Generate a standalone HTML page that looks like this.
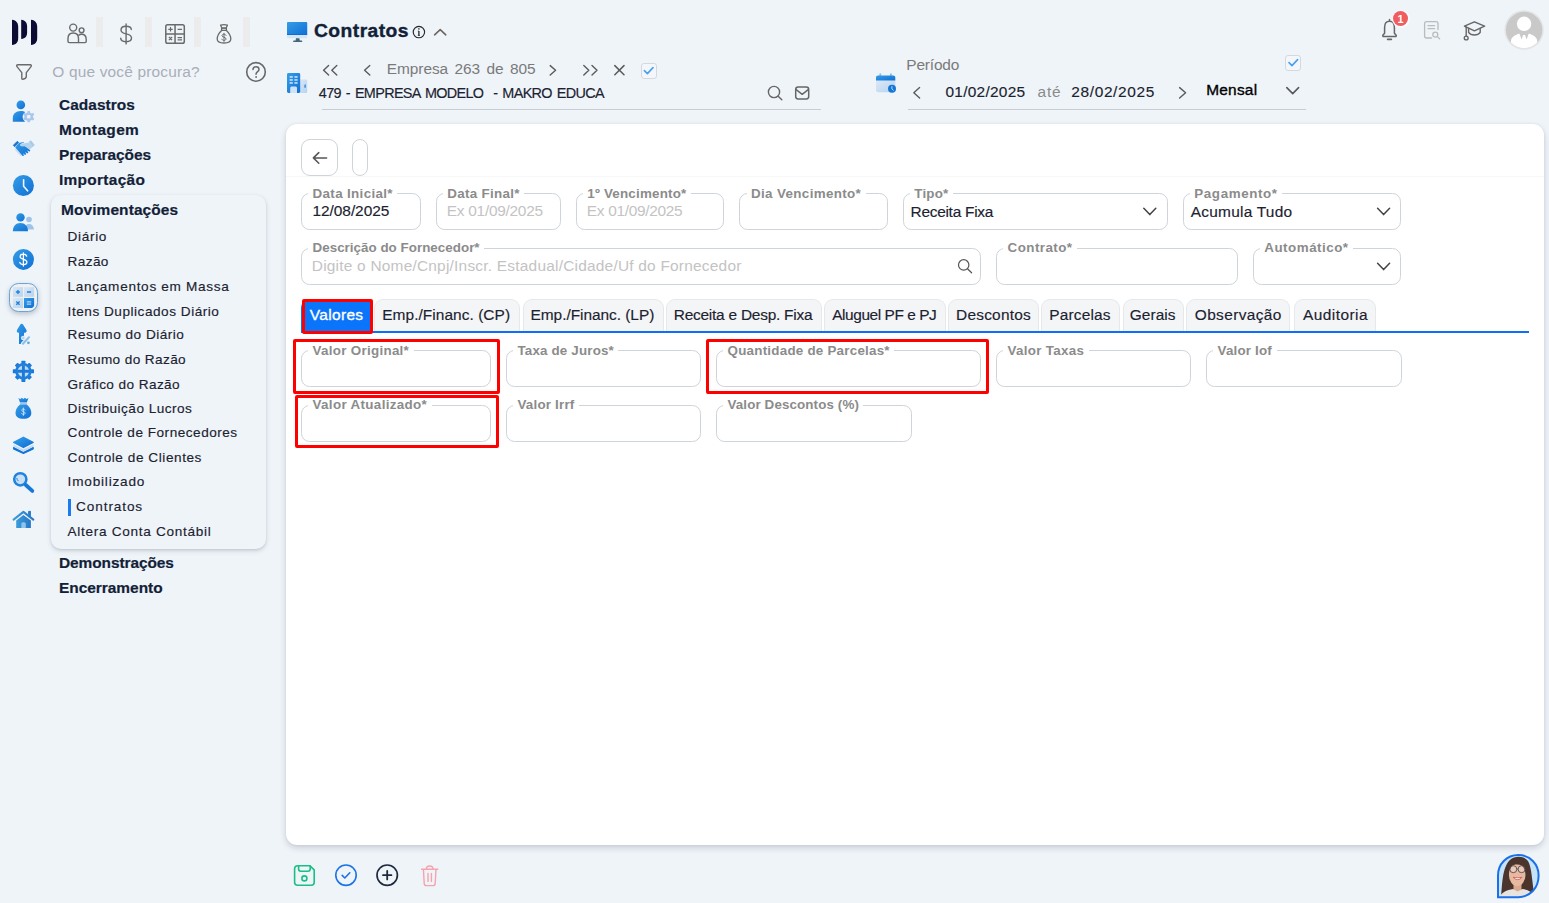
<!DOCTYPE html>
<html lang="pt-BR">
<head>
<meta charset="utf-8">
<title>Contratos</title>
<style>
*{box-sizing:border-box;margin:0;padding:0}
html,body{width:1549px;height:903px;overflow:hidden}
body{background:#eff4f9;font-family:"Liberation Sans",sans-serif;position:relative;color:#1f2329}
.a{position:absolute}
.t{position:absolute;white-space:pre;line-height:20px}
.lb{background:#fff;padding:0 4.5px;margin-left:-4.5px}
.card{left:286px;top:124px;width:1258px;height:721px;background:#fff;border-radius:11px;box-shadow:0 3px 6px rgba(50,60,70,.2),0 0 2px rgba(50,60,70,.1)}
.panel{left:51px;top:195px;width:215px;height:354px;background:#eff4f9;border-radius:10px;box-shadow:0 2px 5px rgba(40,55,75,.16),0 1px 2.5px rgba(40,55,75,.11)}
.sep{top:17px;width:7px;height:30px;background:#ececec}
.f{position:absolute;border:1px solid #ced4da;border-radius:8.5px;height:37px;background:#fff}
.tab{position:absolute;top:299px;height:32px;background:#f4f5f6;border:1px solid #e6e8ea;border-bottom:none;border-radius:9px 9px 0 0}
.red{position:absolute;z-index:5;border:3px solid #ff0000;border-radius:2px}
.btn{position:absolute;border:1px solid #cfd4d9;border-radius:9px;background:#fff;top:139px;height:37px}
.ul{position:absolute;height:1px;background:#c9ccd0;top:109px}
svg{position:absolute;overflow:visible}
</style>
</head>
<body>
<div class="a panel"></div>
<div class="a" style="left:68px;top:499px;width:3px;height:17px;background:#1a7af0"></div>
<div class="a sep" style="left:96px"></div>
<div class="a sep" style="left:145px"></div>
<div class="a sep" style="left:194px"></div>
<div class="a sep" style="left:243px"></div>
<div class="ul" style="left:322px;width:499px"></div>
<div class="ul" style="left:908px;width:398px"></div>
<div class="a card"></div>
<div class="a" style="left:286px;top:176px;width:1258px;height:1px;background:#f8f8f8"></div>
<div class="btn" style="left:301px;width:37px"></div>
<div class="btn" style="left:352px;width:16px"></div>
<!-- row 1 -->
<div class="f" style="left:301px;top:193px;width:120px"></div>
<div class="f" style="left:436px;top:193px;width:125px"></div>
<div class="f" style="left:576px;top:193px;width:147.5px"></div>
<div class="f" style="left:739px;top:193px;width:149px"></div>
<div class="f" style="left:903px;top:193px;width:265px"></div>
<div class="f" style="left:1183px;top:193px;width:218px"></div>
<!-- row 2 -->
<div class="f" style="left:301px;top:248px;width:680px"></div>
<div class="f" style="left:996px;top:248px;width:242px"></div>
<div class="f" style="left:1253px;top:248px;width:148px"></div>
<!-- tabs -->
<div class="a" style="left:301px;top:331px;width:1228px;height:2px;background:#0b6ff8"></div>
<div class="a" style="left:301px;top:300px;width:72px;height:33px;background:#0a75fb;border-radius:8px 8px 0 0"></div>
<div class="tab" style="left:374px;width:146px"></div>
<div class="tab" style="left:522.5px;width:141px"></div>
<div class="tab" style="left:666px;width:156px"></div>
<div class="tab" style="left:824px;width:122px"></div>
<div class="tab" style="left:948px;width:91px"></div>
<div class="tab" style="left:1041px;width:79px"></div>
<div class="tab" style="left:1122.5px;width:61px"></div>
<div class="tab" style="left:1186px;width:104px"></div>
<div class="tab" style="left:1294px;width:82px"></div>
<!-- row 3 -->
<div class="f" style="left:301px;top:350px;width:190px"></div>
<div class="f" style="left:506px;top:350px;width:195px"></div>
<div class="f" style="left:716px;top:350px;width:265px"></div>
<div class="f" style="left:996px;top:350px;width:195px"></div>
<div class="f" style="left:1206px;top:350px;width:196px"></div>
<!-- row 4 -->
<div class="f" style="left:301px;top:405px;width:190px"></div>
<div class="f" style="left:506px;top:405px;width:195px"></div>
<div class="f" style="left:716px;top:405px;width:196px"></div>
<!-- red boxes -->
<div class="red" style="left:302px;top:299px;width:71px;height:35px"></div>
<div class="red" style="left:293px;top:339px;width:207px;height:55px"></div>
<div class="red" style="left:706px;top:339px;width:283px;height:55px"></div>
<div class="red" style="left:295px;top:395px;width:204px;height:53px"></div>

<svg width="0" height="0"><defs>
<linearGradient id="gb" x1="0" y1="0" x2="1" y2="1"><stop offset="0" stop-color="#359de6"/><stop offset="1" stop-color="#0f6fd6"/></linearGradient>
<linearGradient id="gl" x1="0" y1="0" x2="1" y2="1"><stop offset="0" stop-color="#dbe8f6"/><stop offset="1" stop-color="#b7d3ef"/></linearGradient>
</defs></svg>
<!-- logo -->
<svg style="left:11px;top:19px" width="28" height="27" viewBox="11 19 28 27">
<path d="M12 19.8 C16.5 20.3 18.2 23.5 18.2 27 V38 C18.2 42 16.5 44.6 12 45.1 Z" fill="#0b0b33"/>
<path d="M21.2 19.8 C25.5 20.3 27.1 23 27.1 26.5 V32.5 C27.1 36 25.5 38.6 21.2 39.1 Z" fill="#0b0b33"/>
<path d="M31 19.8 C35.5 20.3 37.2 23.5 37.2 27 V38 C37.2 42 35.5 44.6 31 45.1 Z" fill="#0b0b33"/>
</svg>
<!-- people outline -->
<svg style="left:66px;top:23px" width="22" height="22" viewBox="66 23 22 22" fill="none" stroke="#6a6a6a" stroke-width="1.4" stroke-linejoin="round">
<circle cx="73.2" cy="27.6" r="3.5"/>
<path d="M68 41.5 V38.5 C68 35 70 33 73.2 33 C76.4 33 78.5 35 78.5 38.5 V42.6 H69.2 C68.4 42.6 68 42.2 68 41.5 Z"/>
<circle cx="81.6" cy="30.3" r="2.4"/>
<path d="M78.5 42.6 H85 C85.8 42.6 86.2 42.2 86.2 41.5 V39.5 C86.2 36.2 84.5 34.3 81.6 34.3 C80.3 34.3 79.3 34.7 78.5 35.4"/>
</svg>
<!-- dollar outline -->
<svg style="left:119px;top:23px" width="14" height="22" viewBox="119 23 14 22" fill="none" stroke="#6a6a6a" stroke-width="1.4" stroke-linecap="round">
<path d="M126.1 24 V43.9"/>
<path d="M131.3 29.6 C131.3 27.5 129.3 26.3 126.1 26.3 C123 26.3 121 27.7 121 30 C121 32.4 123 33.2 126.1 33.9 C129.4 34.6 131.5 35.5 131.5 38 C131.5 40.4 129.4 41.7 126.1 41.7 C122.8 41.7 120.7 40.4 120.7 38.1"/>
</svg>
<!-- calculator outline -->
<svg style="left:164px;top:23px" width="22" height="22" viewBox="164 23 22 22" fill="none" stroke="#6a6a6a" stroke-width="1.5">
<rect x="165.8" y="24.7" width="18.5" height="18.5" rx="1.8"/>
<path d="M175.05 24.7 V43.2 M165.8 33.95 H184.3"/>
<path d="M168.3 29.3 H172.7 M170.5 27.1 V31.5 M177.6 29.3 H182 M168.9 37 L172.1 40.2 M172.1 37 L168.9 40.2 M177.6 37.6 H182 M177.6 39.8 H182" stroke-width="1.2"/>
</svg>
<!-- money bag outline -->
<svg style="left:215px;top:23px" width="18" height="22" viewBox="215 23 18 22" fill="none" stroke="#6a6a6a" stroke-width="1.3" stroke-linejoin="round" stroke-linecap="round">
<path d="M220.6 25.2 C222.5 24.6 225.5 24.6 227.4 25.2 L226 28.2 H222 Z"/>
<path d="M221.6 28.2 H226.4 V30.4 H221.6 Z"/>
<path d="M221.6 30.4 C218.8 33 217.2 36.5 217.2 39 C217.2 41.8 219.5 43 224 43 C228.5 43 230.8 41.8 230.8 39 C230.8 36.5 229.2 33 226.4 30.4"/>
<path d="M226 35.3 C225.6 34.5 224.9 34.2 224 34.2 C222.8 34.2 222 34.8 222 35.7 C222 37.6 226 36.9 226 38.9 C226 39.8 225.2 40.4 224 40.4 C222.9 40.4 222.2 40 221.9 39.2 M224 33.3 V41.3" stroke-width="1"/>
</svg>
<!-- filter -->
<svg style="left:15px;top:63px" width="18" height="18" viewBox="15 63 18 18" fill="none" stroke="#6a6a6a" stroke-width="1.4" stroke-linejoin="round">
<path d="M17.8 64.8 H30.2 C31.3 64.8 31.7 65.7 31 66.6 L26.3 72.6 V76.5 C26.3 78 24.5 79 22.8 79.3 C22 79.4 21.8 79 21.8 78.3 V72.6 L17 66.6 C16.3 65.7 16.7 64.8 17.8 64.8 Z"/>
</svg>
<!-- help -->
<svg style="left:245px;top:61px" width="22" height="22" viewBox="245 61 22 22" fill="none" stroke="#686868" stroke-width="1.600" stroke-linecap="round">
<circle cx="256" cy="71.9" r="9.3"/>
<path d="M253 69.6 C253 67.9 254.2 66.8 256 66.8 C257.8 66.8 259 67.9 259 69.4 C259 71.6 256 71.6 256 74.2" stroke-width="1.500"/>
<circle cx="256" cy="77" r=".5" fill="#666" stroke-width=".8"/>
</svg>
<!-- user gear -->
<svg style="left:12px;top:100px" width="24" height="24" viewBox="12 100 24 24">
<circle cx="20.8" cy="104.9" r="4.3" fill="url(#gb)"/>
<path d="M12.8 121.8 V118.5 C12.8 113.8 15.8 111 20.8 111 C22.6 111 24.2 111.4 25.4 112.1 C23.6 113.4 22.6 115 22.6 116.8 C22.6 118.8 23.6 120.6 25.2 121.8 Z" fill="url(#gb)"/>
<g transform="translate(28.7 116.7)" fill="#a9c8ec">
<path d="M-1.1 -5.6 H1.1 L1.5 -4 L3 -3.2 L4.5 -3.9 L5.6 -2 L4.4 -.9 V.9 L5.6 2 L4.5 3.9 L3 3.2 L1.5 4 L1.1 5.6 H-1.1 L-1.5 4 L-3 3.2 L-4.5 3.9 L-5.6 2 L-4.4 .9 V-.9 L-5.6 -2 L-4.5 -3.9 L-3 -3.2 L-1.5 -4 Z"/>
<circle r="1.9" fill="#eff4f9"/>
</g>
</svg>
<!-- handshake -->
<svg style="left:12px;top:139px" width="24" height="19" viewBox="12 139 24 19">
<path d="M20.4 144 L28.8 142.400 L32.6 146.800 L29.800 149.600 L25.200 146 L22.400 146 C21 146 20.200 145.200 20.400 144 Z" fill="#b3d3ed"/>
<path d="M29.200 141.900 L30.900 140.700 L34.300 145 L32.700 146.700 Z" fill="#a6cbea" stroke="#a6cbea" stroke-width=".8" stroke-linejoin="round"/>
<path d="M15.600 149.600 L17 151.200 M17.500 151.800 L18.900 153.400 M19.500 153.800 L20.800 155.300" stroke="#c8dff3" stroke-width="1.400" stroke-linecap="round"/>
<path d="M15.200 147.400 L18.800 143.200 C20.200 142.300 22 142 24 142.200 L23.800 143.100 C22 143.100 20.800 143.600 20 144.700 C20.400 145.800 21.400 146.200 22.600 146.200 L25 146.200 L30 150 C30.500 150.700 30 151.700 29.200 151.400 L27.200 150.300 L28.300 152.400 C28.100 153.300 27.300 153.500 26.600 153 L25.200 151.800 L26.100 154 C25.900 154.900 25.100 155.100 24.400 154.600 L23.200 153.300 L23.900 155.400 C23.700 156.100 22.900 156.300 22.400 155.700 Z" fill="url(#gb)"/>
<path d="M13.300 145.300 L17.300 141.300 L18.700 142.500 L14.700 146.700 Z" fill="#1672d5" stroke="#1672d5" stroke-width=".8" stroke-linejoin="round"/>
</svg>
<!-- clock -->
<svg style="left:12px;top:174px" width="24" height="24" viewBox="12 174 24 24">
<circle cx="23.4" cy="185.5" r="10.5" fill="url(#gb)"/>
<path d="M23.6 179.8 V186.2 L27.6 190.8" fill="none" stroke="#eef5fc" stroke-width="1.6" stroke-linecap="round" stroke-linejoin="round"/>
</svg>
<!-- people -->
<svg style="left:12px;top:212px" width="24" height="20" viewBox="12 212 24 20">
<circle cx="29" cy="219.5" r="2.8" fill="#9cc3ea"/>
<path d="M24.5 229.6 C24.7 226 26.3 224 29 224 C31.8 224 33.6 226 34 229.6 Z" fill="#9cc3ea"/>
<circle cx="20.5" cy="217.4" r="4.2" fill="url(#gb)"/>
<path d="M12.8 231.2 C13 226 15.8 223 20.4 223 C25 223 27.8 226 28 231.2 Z" fill="url(#gb)"/>
</svg>
<!-- dollar circle -->
<svg style="left:12px;top:248px" width="24" height="24" viewBox="12 248 24 24">
<circle cx="23.4" cy="259.4" r="10.5" fill="url(#gb)"/>
<path d="M26.7 256.2 C26.3 254.9 25.1 254.2 23.4 254.2 C21.4 254.2 20.1 255.2 20.1 256.7 C20.1 260 26.9 258.6 26.9 262 C26.9 263.6 25.5 264.6 23.4 264.6 C21.5 264.6 20.2 263.8 19.8 262.4 M23.4 252.8 V266" fill="none" stroke="#fff" stroke-width="1.25" stroke-linecap="round"/>
</svg>
<!-- calc active -->
<div class="a" style="left:9px;top:283px;width:29px;height:29px;border-radius:9.5px;background:#f0f0ef;border:1px solid #62a6e3;box-shadow:0 2px 5px rgba(60,70,90,.3)"></div>
<svg style="left:12px;top:286px" width="23" height="23" viewBox="12 286 23 23">
<rect x="12.900" y="287.100" width="10.100" height="9.700" fill="url(#gl)"/>
<rect x="24" y="287.100" width="10.100" height="9.700" fill="url(#gl)"/>
<rect x="12.900" y="298" width="10.100" height="10" fill="url(#gl)"/>
<path d="M24 298 H34.100 V306 L32.100 308 H24 Z" fill="url(#gb)"/>
<path d="M15.900 292 H20 M17.950 289.950 V294.050 M27 292 H31.100 M16.300 301.400 L19.600 304.700 M19.600 301.400 L16.300 304.700" stroke="#2283dc" stroke-width="1.400" fill="none"/>
<path d="M26.800 301.800 H31.200 M26.800 304.200 H31.200" stroke="#b9d8f4" stroke-width="1.300"/>
</svg>
<!-- arrow up percent -->
<svg style="left:15px;top:322px" width="18" height="24" viewBox="15 322 18 24">
<path d="M21.700 323.800 C22.300 323.800 22.800 324.100 23.200 324.700 L26.300 329.800 C27.200 331.400 26.400 332.800 24.800 332.800 H24 V343.900 H19 V332.800 H18.600 C17 332.800 16.200 331.400 17.100 329.800 L20.200 324.700 C20.600 324.100 21.100 323.800 21.700 323.800 Z" fill="url(#gb)"/>
<path d="M22.900 343.700 L29 337.300" stroke="#eff4f9" stroke-width="4" stroke-linecap="round"/>
<circle cx="23.300" cy="338" r="2.300" fill="#eff4f9"/>
<path d="M22.900 343.700 L29 337.300" stroke="#8fc0e6" stroke-width="2.100" stroke-linecap="round"/>
<circle cx="23.300" cy="338" r="1.400" fill="#b5d5ef"/><circle cx="28.400" cy="342.800" r="1.400" fill="#5ea8de"/>
</svg>
<!-- gear with cross -->
<svg style="left:12px;top:360px" width="24" height="24" viewBox="12 360 24 24">
<g transform="translate(23.4 371.3)">
<circle r="6.6" fill="#c2dbf3"/>
<g fill="#1b7ad9"><rect x="-2" y="-10.6" width="4" height="4" rx=".6"/><rect x="-2" y="6.6" width="4" height="4" rx=".6"/><rect x="-10.6" y="-2" width="4" height="4" rx=".6"/><rect x="6.6" y="-2" width="4" height="4" rx=".6"/>
<g transform="rotate(45)"><rect x="-2" y="-10.2" width="4" height="3.6" rx=".6"/><rect x="-2" y="6.6" width="4" height="3.6" rx=".6"/><rect x="-10.2" y="-2" width="3.6" height="4" rx=".6"/><rect x="6.6" y="-2" width="3.6" height="4" rx=".6"/></g></g>
<circle r="7" fill="none" stroke="#1f80dc" stroke-width="2.600"/>
<path d="M0 -6 V6 M-6 0 H6" stroke="#1b7ad9" stroke-width="2.900"/>
</g>
</svg>
<!-- money bag -->
<svg style="left:14px;top:396px" width="20" height="24" viewBox="14 396 20 24">
<path d="M18.300 397.900 L20.300 399 L21.900 397.800 L23.400 399 L24.900 397.800 L26.500 399 L28.500 397.900 L26.800 402.400 H20 Z" fill="url(#gb)"/>
<rect x="20" y="402.500" width="6.800" height="2" fill="#9cc6ec"/>
<path d="M20 404.600 H26.800 C29.800 407 31.300 410 31.300 413 C31.300 416.800 28.400 418.800 23.400 418.800 C18.400 418.800 15.500 416.800 15.500 413 C15.500 410 17 407 20 404.600 Z" fill="url(#gb)"/>
<path d="M25 410 C24.800 409.400 24.200 409 23.400 409 C22.400 409 21.800 409.500 21.800 410.300 C21.800 412 25.100 411.300 25.100 413.100 C25.100 413.900 24.400 414.400 23.400 414.400 C22.500 414.400 21.900 414 21.700 413.300 M23.400 408 V415.400" fill="none" stroke="#cfe4f8" stroke-width=".9" stroke-linecap="round"/>
</svg>
<!-- layers -->
<svg style="left:12px;top:435px" width="24" height="20" viewBox="12 435 24 20">
<path d="M13.600 447.600 L23.400 452.600 L33.200 447.600 V449 L23.400 453.400 L13.600 449 Z" fill="#1276d8" stroke="#1276d8" stroke-width="1.200" stroke-linejoin="round"/>
<path d="M13.400 444.400 L23.400 449.400 L33.400 444.400 V446.600 L23.400 451.400 L13.400 446.600 Z" fill="#c3dcf3"/>
<path d="M23.400 437.400 L33 442.400 L23.400 447.400 L13.800 442.400 Z" fill="url(#gb)" stroke="url(#gb)" stroke-width="1.600" stroke-linejoin="round"/>
</svg>
<!-- magnifier -->
<svg style="left:12px;top:470px" width="24" height="24" viewBox="12 470 24 24">
<circle cx="20.300" cy="479.300" r="6.100" fill="#c9dff4" stroke="#1f83de" stroke-width="2.500"/>
<path d="M16.800 478.400 C17 479.400 17.400 480.200 18.100 480.800" stroke="#1f83de" stroke-width="1" fill="none" stroke-linecap="round"/>
<path d="M25.800 485 L32.300 490.900" stroke="#1678d8" stroke-width="3.800" stroke-linecap="round"/>
</svg>
<!-- home -->
<svg style="left:12px;top:509px" width="24" height="20" viewBox="12 509 24 20">
<defs><linearGradient id="gh" x1="0" y1="0" x2="1" y2="0"><stop offset="0" stop-color="#3b9cdc"/><stop offset="1" stop-color="#2877c6"/></linearGradient></defs>
<rect x="28.200" y="510.900" width="2.700" height="7" fill="#2a7fcb"/>
<path d="M16.200 520.600 L23.400 514.900 L30.900 520.600 V527.900 H16.200 Z" fill="url(#gh)"/>
<path d="M13.500 519.700 L23.400 511.900 L33.400 519.700" fill="none" stroke="#eff4f9" stroke-width="3.300" stroke-linejoin="miter"/>
<path d="M13.600 519.600 L23.400 511.900 L33.300 519.600" fill="none" stroke="url(#gh)" stroke-width="2.100" stroke-linejoin="round" stroke-linecap="round"/>
<path d="M28.200 515.700 V512 H30.900 V517.800 Z" fill="#2a7fcb"/>
<path d="M21.300 527.900 V524 C21.300 522.900 22.200 522.300 23.500 522.300 C24.800 522.300 25.800 522.900 25.800 524 V527.900 Z" fill="#8fc3ea"/>
</svg>
<!-- monitor -->
<svg style="left:286px;top:21px" width="22" height="22" viewBox="286 21 22 22">
<path d="M296 38 H299.4 L299.8 40.400 H301.6 C302 40.400 302.200 40.700 302.200 41.100 V41.900 H293.200 V41.100 C293.200 40.700 293.400 40.400 293.800 40.400 H295.600 Z" fill="#41697b"/>
<rect x="287" y="22" width="20.2" height="16.2" rx="1" fill="#d6e5f4"/>
<rect x="287" y="22" width="20.2" height="13" rx="1" fill="url(#gb)"/>
<rect x="287" y="34" width="20.2" height="1" fill="#0e6cd3"/>
</svg>
<!-- info -->
<svg style="left:412px;top:25px" width="14" height="14" viewBox="412 25 14 14" fill="none" stroke="#23272e" stroke-width="1.15">
<circle cx="418.9" cy="32.1" r="5.7"/>
<path d="M418.9 31 V35.4" stroke-width="1.3"/><circle cx="418.9" cy="28.9" r=".45" fill="#23272e" stroke-width=".7"/>
<path d="M417.9 31.1 H418.9 M417.8 35.4 H420" stroke-width=".8"/>
</svg>
<!-- chevron up -->
<svg style="left:433px;top:28px" width="14" height="9" viewBox="433 28 14 9" fill="none" stroke="#6a6663" stroke-width="1.6" stroke-linecap="round" stroke-linejoin="round"><path d="M434.6 34.8 L440.2 29.6 L445.8 34.8"/></svg>
<!-- building -->
<svg style="left:286px;top:72px" width="22" height="22" viewBox="286 72 22 22">
<rect x="299" y="79.4" width="8.2" height="13.6" rx="1.2" fill="url(#gl)"/>
<rect x="304.4" y="84.4" width="1.4" height="3.4" rx=".5" fill="#2a86de"/>
<rect x="287" y="73" width="13.2" height="20" rx="1.4" fill="url(#gb)"/>
<g fill="#d4e6f8"><rect x="289.6" y="76.2" width="3.2" height="1.5"/><rect x="294.4" y="76.2" width="3.2" height="1.5"/><rect x="289.6" y="79.2" width="3.2" height="1.5"/><rect x="294.4" y="79.2" width="3.2" height="1.5"/><rect x="289.6" y="82.2" width="3.2" height="1.5"/><rect x="294.4" y="82.2" width="3.2" height="1.5"/></g>
<path d="M290.2 93 V88 C290.2 87 290.9 86.4 291.8 86.4 H295.4 C296.3 86.4 297 87 297 88 V93 Z" fill="#cfe2f6"/>
</svg>
<!-- nav arrows -->
<svg style="left:322px;top:64px" width="306" height="13" viewBox="322 64 306 13" fill="none" stroke="#5a5a5a" stroke-width="1.4" stroke-linecap="round" stroke-linejoin="round">
<path d="M328.6 65.6 L323.6 70.3 L328.6 75 M336.8 65.6 L331.8 70.3 L336.8 75"/>
<path d="M369.8 65.6 L364.6 70.3 L369.8 75"/>
<path d="M550.2 65.6 L555.6 70.3 L550.2 75"/>
<path d="M583.8 65.6 L588.8 70.3 L583.8 75 M592 65.6 L597 70.3 L592 75"/>
<path d="M614.8 65.6 L624 74.8 M624 65.6 L614.8 74.8" stroke-width="1.5"/>
</svg>
<!-- checkbox 1 -->
<div class="a" style="left:640.5px;top:63px;width:16px;height:15.5px;border:1px solid #d5d9de;border-radius:3px;background:#f3f6fa"></div>
<svg style="left:640px;top:63px" width="17" height="16" viewBox="640 63 17 16" fill="none" stroke="#4aa0ee" stroke-width="1.6" stroke-linecap="round" stroke-linejoin="round"><path d="M644.4 70.6 L647.4 73.6 L653 67.6"/></svg>
<!-- search + mail -->
<svg style="left:767px;top:85px" width="44" height="17" viewBox="767 85 44 17" fill="none" stroke="#666" stroke-width="1.4" stroke-linecap="round">
<circle cx="774" cy="92" r="5.6"/><path d="M778.2 96.2 L781.8 99.8"/>
<rect x="795.7" y="87.1" width="13" height="11.8" rx="2.4" stroke-width="1.5"/>
<path d="M796.2 89.6 L802.2 94.4 L808.2 89.6" stroke-linejoin="round"/>
</svg>
<!-- calendar -->
<svg style="left:875px;top:72px" width="23" height="23" viewBox="875 72 23 23">
<rect x="879.4" y="73.2" width="1.8" height="4" rx=".8" fill="#8fbbe8"/><rect x="890" y="73.2" width="1.8" height="4" rx=".8" fill="#8fbbe8"/>
<path d="M876 80.2 H895.3 V90 C895.3 91.3 894.5 92.2 893.2 92.2 H878.1 C876.8 92.2 876 91.3 876 90 Z" fill="url(#gl)"/>
<path d="M878.1 75.4 H893.2 C894.5 75.4 895.3 76.3 895.3 77.6 V80.6 H876 V77.6 C876 76.3 876.8 75.4 878.1 75.4 Z" fill="url(#gb)"/>
<circle cx="892" cy="88.8" r="4" fill="#1477d8"/>
<path d="M891.9 86.6 V88.9 L893.3 90.2" fill="none" stroke="#cfe3f7" stroke-width=".9" stroke-linecap="round"/>
</svg>
<!-- period arrows -->
<svg style="left:912px;top:85px" width="390" height="15" viewBox="912 85 390 15" fill="none" stroke="#5a5a5a" stroke-width="1.4" stroke-linecap="round" stroke-linejoin="round">
<path d="M919.6 87.6 L913.8 92.8 L919.6 98"/>
<path d="M1179.6 87.6 L1185.6 92.8 L1179.6 98"/>
<path d="M1286.8 87.6 L1292.7 93.6 L1298.6 87.6" stroke-width="1.6"/>
</svg>
<!-- checkbox 2 -->
<div class="a" style="left:1285px;top:55px;width:16px;height:15.5px;border:1px solid #d5d9de;border-radius:3px;background:#f3f6fa"></div>
<svg style="left:1285px;top:55px" width="17" height="16" viewBox="1285 55 17 16" fill="none" stroke="#4aa0ee" stroke-width="1.6" stroke-linecap="round" stroke-linejoin="round"><path d="M1289 62.6 L1292 65.6 L1297.6 59.6"/></svg>
<!-- bell -->
<svg style="left:1380px;top:17px" width="20" height="25" viewBox="1380 17 20 25" fill="none" stroke="#666" stroke-width="1.5" stroke-linecap="round" stroke-linejoin="round">
<path d="M1389.5 19.6 V21 M1384.6 33.2 V27.4 C1384.6 23.6 1386.4 21.2 1389.5 21.2 C1392.6 21.2 1394.4 23.6 1394.4 27.4 V33.2 L1396 35 C1396.5 35.8 1396.2 36.6 1395.2 36.6 H1383.8 C1382.8 36.6 1382.5 35.8 1383 35 Z"/>
<path d="M1387.6 39.4 H1391.4" stroke-width="1.6"/>
</svg>
<div class="a" style="left:1391.5px;top:9.5px;width:18px;height:18px;border-radius:50%;background:#f9fbfd"></div>
<div class="a" style="left:1393px;top:11px;width:15px;height:15px;border-radius:50%;background:#f05d5e"></div>
<!-- doc search -->
<svg style="left:1423px;top:20px" width="19" height="20" viewBox="1423 20 19 20" fill="none" stroke="#b9bbbd" stroke-width="1.3" stroke-linecap="round" stroke-linejoin="round">
<path d="M1431.6 38 H1426.6 C1425.3 38 1424.6 37.2 1424.6 36 V23.6 C1424.6 22.4 1425.3 21.7 1426.6 21.7 H1436 C1437.3 21.7 1438 22.4 1438 23.6 V29.6"/>
<path d="M1428 25.6 H1434.6 M1428 28.6 H1434.6"/>
<circle cx="1435.3" cy="34.6" r="2.5"/><path d="M1437.3 36.6 L1439.6 38.8"/>
</svg>
<!-- grad cap -->
<svg style="left:1462px;top:20px" width="25" height="22" viewBox="1462 20 25 22" fill="none" stroke="#666" stroke-width="1.4" stroke-linecap="round" stroke-linejoin="round">
<path d="M1474.4 21.8 L1484.6 26.2 L1474.4 30.8 L1464.4 26.2 Z"/>
<path d="M1468.6 28.4 V32.4 C1469.8 34.2 1472 35 1474.4 35 C1476.8 35 1479 34.2 1480.2 32.4 V28.4"/>
<path d="M1466.2 27.2 V36"/><circle cx="1466.2" cy="38" r="1.9"/>
</svg>
<!-- avatar -->
<svg style="left:1504px;top:10px" width="40" height="40" viewBox="1504 10 40 40">
<defs><clipPath id="avc"><circle cx="1524.1" cy="30" r="18.2"/></clipPath></defs>
<circle cx="1524.1" cy="30" r="19.7" fill="#e3e4e5"/>
<circle cx="1524.1" cy="30" r="18.2" fill="#c9c9c9"/>
<g clip-path="url(#avc)" fill="#fff">
<circle cx="1524.1" cy="23.8" r="7.2"/>
<path d="M1511 50 V41 C1511 37.6 1514 35.2 1519.4 33.4 L1521.6 39.6 L1523.2 35 H1525 L1526.6 39.6 L1528.8 33.4 C1534.200 35.2 1537.200 37.600 1537.200 41 V50 Z"/>
</g>
</svg>
<!-- back arrow -->
<svg style="left:311px;top:150px" width="18" height="16" viewBox="311 150 18 16" fill="none" stroke="#555" stroke-width="1.5" stroke-linecap="round" stroke-linejoin="round"><path d="M326.6 157.9 H313.6 M318.8 152.6 L313.4 157.9 L318.8 163.2"/></svg>
<!-- select chevrons -->
<svg style="left:1142px;top:205px" width="250" height="70" viewBox="1142 205 250 70" fill="none" stroke="#444" stroke-width="1.5" stroke-linecap="round" stroke-linejoin="round">
<path d="M1143.8 208.2 L1149.8 214.6 L1155.8 208.2"/>
<path d="M1377.6 208.2 L1383.6 214.6 L1389.6 208.2"/>
<path d="M1377.6 263.200 L1383.6 269.600 L1389.6 263.200"/>
</svg>
<!-- field search -->
<svg style="left:957px;top:258px" width="17" height="17" viewBox="957 258 17 17" fill="none" stroke="#555" stroke-width="1.2" stroke-linecap="round"><circle cx="963.7" cy="264.9" r="5.2"/><path d="M967.5 268.8 L971.6 272.8"/></svg>
<!-- bottom buttons -->
<svg style="left:292px;top:863px" width="150" height="25" viewBox="292 863 150 25" fill="none" stroke-width="1.6" stroke-linecap="round" stroke-linejoin="round">
<g stroke="#1bbf83"><path d="M297.6 865.8 H310 L314.2 869.8 V882.200 C314.2 884.2 313 885.2 311.2 885.2 H297.6 C295.8 885.2 294.6 884.2 294.6 882.200 V868.8 C294.6 866.8 295.8 865.8 297.6 865.8 Z"/><path d="M298.6 866 V869 C298.6 870.4 299.4 871.200 300.8 871.200 H308 C309.4 871.200 310.2 870.4 310.2 869 V866"/><circle cx="304.4" cy="878.4" r="2.5"/></g>
<g stroke="#1a73e8"><circle cx="346" cy="875.2" r="10.2"/><path d="M342.2 875.4 L344.8 878 L349.8 872.8"/></g>
<g stroke="#1e293b"><circle cx="387.2" cy="875.2" r="10.2" stroke-width="1.7"/><path d="M383 875.2 H391.4 M387.2 871 V879.4" stroke-width="1.8"/></g>
<g stroke="#f5a3ae" stroke-width="1.4"><path d="M421.6 869.2 H437.8 M426.4 869 C426.4 867 427.6 866 429.7 866 C431.8 866 433 867 433 869 M423.4 869.4 L424.2 883.4 C424.3 884.8 425 885.6 426.4 885.6 H433 C434.4 885.6 435.1 884.8 435.2 883.4 L436 869.4 M428 873.4 V881.4 M431.4 873.4 V881.4"/></g>
</svg>
<!-- assistant avatar -->
<svg style="left:1496px;top:853px" width="46" height="46" viewBox="1496 853 46 46">
<defs><clipPath id="asc"><path d="M1498 897.2 V875.4 C1498 864 1506.6 855 1518.3 855 C1530 855 1538.6 864 1538.6 875.4 C1538.6 888 1530 897.2 1518.3 897.2 Z"/></clipPath></defs>
<path d="M1498 897.2 V875.4 C1498 864 1506.6 855 1518.3 855 C1530 855 1538.6 864 1538.6 875.4 C1538.6 888 1530 897.2 1518.3 897.2 Z" fill="#c5e4fb"/>
<g clip-path="url(#asc)">
<path d="M1501 898 C1502.5 886 1501.5 862 1514 857.6 C1519 856 1525 857 1528 861 C1532 867 1532 884 1535 898 Z" fill="#4b342b"/>
<rect x="1513.5" y="883" width="8" height="9" fill="#d9a88f"/>
<ellipse cx="1517.2" cy="874.8" rx="8.3" ry="11.2" fill="#e8b9a1"/>
<path d="M1507.5 872 C1507 863 1512 859.5 1518 859.5 C1524 859.5 1528 864 1527.500 873 C1526 867 1522 864.5 1517 864.5 C1512 864.5 1509 867 1507.500 872 Z" fill="#4b342b"/>
<path d="M1499 898 C1501 892.5 1507 890 1513 889 L1517.600 891.600 L1522.500 889 C1529 890 1533.500 893 1535 898 Z" fill="#e6e3e1"/>
<circle cx="1513.300" cy="869.2" r="3.500" fill="rgba(255,255,255,.22)" stroke="#4a4c57" stroke-width=".9"/>
<circle cx="1521.600" cy="869.2" r="3.500" fill="rgba(255,255,255,.22)" stroke="#4a4c57" stroke-width=".9"/>
<path d="M1516.800 869 H1518.100" stroke="#4a4c57" stroke-width=".8"/>
<path d="M1513.300 877.200 C1515.500 880.400 1519.800 880.400 1522 877.200 C1519 878 1516 878 1513.300 877.200 Z" fill="#fff" stroke="#cf4d49" stroke-width=".8" stroke-linejoin="round"/>
</g>
<path d="M1498 897.2 V875.4 C1498 864 1506.6 855 1518.3 855 C1530 855 1538.6 864 1538.6 875.4 C1538.6 888 1530 897.2 1518.3 897.2 Z" fill="none" stroke="#1a70e8" stroke-width="2"/>
</svg>

<span class="t" style="left:52.28px;top:61.65px;font-size:15.45px;font-weight:400;color:#a9aeb7;letter-spacing:0.174px">O que você procura?</span>
<span class="t" style="-webkit-text-stroke:.2px;left:59.04px;top:94.65px;font-size:15.45px;font-weight:700;color:#131f38;letter-spacing:0.037px">Cadastros</span>
<span class="t" style="-webkit-text-stroke:.2px;left:59.04px;top:119.65px;font-size:15.45px;font-weight:700;color:#131f38;letter-spacing:0.373px">Montagem</span>
<span class="t" style="-webkit-text-stroke:.2px;left:59.04px;top:144.65px;font-size:15.45px;font-weight:700;color:#131f38;letter-spacing:-0.064px">Preparações</span>
<span class="t" style="-webkit-text-stroke:.2px;left:59.04px;top:169.65px;font-size:15.45px;font-weight:700;color:#131f38;letter-spacing:0.287px">Importação</span>
<span class="t" style="-webkit-text-stroke:.2px;left:61.04px;top:199.65px;font-size:15.45px;font-weight:700;color:#131f38;letter-spacing:0.102px">Movimentações</span>
<span class="t" style="-webkit-text-stroke:.15px;left:67.62px;top:227.29px;font-size:13.6px;font-weight:400;color:#1b2230;letter-spacing:0.657px">Diário</span>
<span class="t" style="-webkit-text-stroke:.15px;left:67.62px;top:252.29px;font-size:13.6px;font-weight:400;color:#1b2230;letter-spacing:0.376px">Razão</span>
<span class="t" style="-webkit-text-stroke:.15px;left:67.62px;top:276.54px;font-size:13.6px;font-weight:400;color:#1b2230;letter-spacing:0.695px">Lançamentos em Massa</span>
<span class="t" style="-webkit-text-stroke:.15px;left:67.62px;top:301.54px;font-size:13.6px;font-weight:400;color:#1b2230;letter-spacing:0.524px">Itens Duplicados Diário</span>
<span class="t" style="-webkit-text-stroke:.15px;left:67.62px;top:325.29px;font-size:13.6px;font-weight:400;color:#1b2230;letter-spacing:0.500px">Resumo do Diário</span>
<span class="t" style="-webkit-text-stroke:.15px;left:67.62px;top:350.29px;font-size:13.6px;font-weight:400;color:#1b2230;letter-spacing:0.390px">Resumo do Razão</span>
<span class="t" style="-webkit-text-stroke:.15px;left:67.62px;top:374.54px;font-size:13.6px;font-weight:400;color:#1b2230;letter-spacing:0.417px">Gráfico do Razão</span>
<span class="t" style="-webkit-text-stroke:.15px;left:67.62px;top:399.29px;font-size:13.6px;font-weight:400;color:#1b2230;letter-spacing:0.484px">Distribuição Lucros</span>
<span class="t" style="-webkit-text-stroke:.15px;left:67.62px;top:423.29px;font-size:13.6px;font-weight:400;color:#1b2230;letter-spacing:0.505px">Controle de Fornecedores</span>
<span class="t" style="-webkit-text-stroke:.15px;left:67.62px;top:448.29px;font-size:13.6px;font-weight:400;color:#1b2230;letter-spacing:0.559px">Controle de Clientes</span>
<span class="t" style="-webkit-text-stroke:.15px;left:67.62px;top:472.29px;font-size:13.6px;font-weight:400;color:#1b2230;letter-spacing:0.803px">Imobilizado</span>
<span class="t" style="-webkit-text-stroke:.15px;left:76.12px;top:497.29px;font-size:13.6px;font-weight:400;color:#1b2230;letter-spacing:0.889px">Contratos</span>
<span class="t" style="-webkit-text-stroke:.15px;left:67.62px;top:521.54px;font-size:13.6px;font-weight:400;color:#1b2230;letter-spacing:0.692px">Altera Conta Contábil</span>
<span class="t" style="-webkit-text-stroke:.2px;left:59.04px;top:552.65px;font-size:15.45px;font-weight:700;color:#131f38;letter-spacing:-0.086px">Demonstrações</span>
<span class="t" style="-webkit-text-stroke:.2px;left:59.04px;top:577.65px;font-size:15.45px;font-weight:700;color:#131f38;letter-spacing:-0.024px">Encerramento</span>
<span class="t" style="-webkit-text-stroke:.4px;left:313.99px;top:20.83px;font-size:19.26px;font-weight:700;color:#131f38;letter-spacing:0.455px">Contratos</span>
<span class="t" style="word-spacing:2.2px;left:386.78px;top:58.90px;font-size:15.45px;font-weight:400;color:#7a7a7a;letter-spacing:-0.067px">Empresa 263 de 805</span>
<span class="t" style="-webkit-text-stroke:.15px;word-spacing:1.6px;left:318.83px;top:83.00px;font-size:14.42px;font-weight:400;color:#1b2230;letter-spacing:-0.659px">479 - EMPRESA MODELO  - MAKRO EDUCA</span>
<span class="t" style="left:906.28px;top:54.65px;font-size:15.45px;font-weight:400;color:#7a7a7a;letter-spacing:-0.171px">Período</span>
<span class="t" style="-webkit-text-stroke:.15px;left:945.53px;top:81.65px;font-size:15.45px;font-weight:400;color:#1b2230;letter-spacing:0.254px">01/02/2025</span>
<span class="t" style="left:1037.53px;top:81.65px;font-size:15.45px;font-weight:400;color:#8a8a8a;letter-spacing:0.791px">até</span>
<span class="t" style="-webkit-text-stroke:.15px;left:1071.28px;top:81.65px;font-size:15.45px;font-weight:400;color:#1b2230;letter-spacing:0.643px">28/02/2025</span>
<span class="t" style="-webkit-text-stroke:.35px;left:1206.28px;top:80.15px;font-size:15.45px;font-weight:500;color:#000;letter-spacing:0.207px">Mensal</span>
<span class="t lb" style="left:312.54px;top:184.11px;font-size:13.39px;font-weight:700;color:#8b8b8b;letter-spacing:0.352px">Data Inicial*</span>
<span class="t lb" style="left:447.29px;top:184.11px;font-size:13.39px;font-weight:700;color:#8b8b8b;letter-spacing:0.317px">Data Final*</span>
<span class="t lb" style="left:587.29px;top:184.11px;font-size:13.39px;font-weight:700;color:#8b8b8b;letter-spacing:0.209px">1º Vencimento*</span>
<span class="t lb" style="left:751.04px;top:184.11px;font-size:13.39px;font-weight:700;color:#8b8b8b;letter-spacing:0.356px">Dia Vencimento*</span>
<span class="t lb" style="left:914.29px;top:184.11px;font-size:13.39px;font-weight:700;color:#8b8b8b;letter-spacing:0.212px">Tipo*</span>
<span class="t lb" style="left:1194.29px;top:184.11px;font-size:13.39px;font-weight:700;color:#8b8b8b;letter-spacing:0.610px">Pagamento*</span>
<span class="t lb" style="left:312.54px;top:238.11px;font-size:13.39px;font-weight:700;color:#8b8b8b;letter-spacing:0.024px">Descrição do Fornecedor*</span>
<span class="t lb" style="left:1007.54px;top:238.11px;font-size:13.39px;font-weight:700;color:#8b8b8b;letter-spacing:0.452px">Contrato*</span>
<span class="t lb" style="left:1264.29px;top:238.11px;font-size:13.39px;font-weight:700;color:#8b8b8b;letter-spacing:0.502px">Automático*</span>
<span class="t lb" style="left:312.54px;top:340.86px;font-size:13.39px;font-weight:700;color:#8b8b8b;letter-spacing:0.295px">Valor Original*</span>
<span class="t lb" style="left:517.49px;top:340.86px;font-size:13.39px;font-weight:700;color:#8b8b8b;letter-spacing:0.164px">Taxa de Juros*</span>
<span class="t lb" style="left:727.54px;top:340.86px;font-size:13.39px;font-weight:700;color:#8b8b8b;letter-spacing:0.236px">Quantidade de Parcelas*</span>
<span class="t lb" style="left:1007.54px;top:340.86px;font-size:13.39px;font-weight:700;color:#8b8b8b;letter-spacing:0.294px">Valor Taxas</span>
<span class="t lb" style="left:1217.54px;top:340.86px;font-size:13.39px;font-weight:700;color:#8b8b8b;letter-spacing:0.190px">Valor Iof</span>
<span class="t lb" style="left:312.54px;top:395.11px;font-size:13.39px;font-weight:700;color:#8b8b8b;letter-spacing:0.346px">Valor Atualizado*</span>
<span class="t lb" style="left:517.49px;top:395.11px;font-size:13.39px;font-weight:700;color:#8b8b8b;letter-spacing:0.198px">Valor Irrf</span>
<span class="t lb" style="left:727.54px;top:395.11px;font-size:13.39px;font-weight:700;color:#8b8b8b;letter-spacing:0.110px">Valor Descontos (%)</span>
<span class="t" style="-webkit-text-stroke:.15px;left:312.53px;top:200.90px;font-size:15.45px;font-weight:400;color:#1b2230;letter-spacing:-0.052px">12/08/2025</span>
<span class="t" style="left:446.78px;top:200.90px;font-size:15.45px;font-weight:400;color:#c3c3c3;letter-spacing:-0.273px">Ex 01/09/2025</span>
<span class="t" style="left:586.78px;top:200.90px;font-size:15.45px;font-weight:400;color:#c3c3c3;letter-spacing:-0.315px">Ex 01/09/2025</span>
<span class="t" style="-webkit-text-stroke:.15px;left:910.53px;top:201.65px;font-size:15.45px;font-weight:400;color:#1b2230;letter-spacing:-0.272px">Receita Fixa</span>
<span class="t" style="-webkit-text-stroke:.15px;left:1190.78px;top:201.65px;font-size:15.45px;font-weight:400;color:#1b2230;letter-spacing:0.237px">Acumula Tudo</span>
<span class="t" style="left:311.78px;top:255.90px;font-size:15.45px;font-weight:400;color:#c3c3c3;letter-spacing:0.220px">Digite o Nome/Cnpj/Inscr. Estadual/Cidade/Uf do Fornecedor</span>
<span class="t" style="-webkit-text-stroke:.35px;left:309.78px;top:304.90px;font-size:15.45px;font-weight:500;color:#fff;letter-spacing:0.349px">Valores</span>
<span class="t" style="-webkit-text-stroke:.15px;left:382.28px;top:305.15px;font-size:15.45px;font-weight:400;color:#1b2230;letter-spacing:0.052px">Emp./Financ. (CP)</span>
<span class="t" style="-webkit-text-stroke:.15px;left:530.53px;top:305.15px;font-size:15.45px;font-weight:400;color:#1b2230;letter-spacing:-0.038px">Emp./Financ. (LP)</span>
<span class="t" style="-webkit-text-stroke:.15px;left:673.78px;top:305.15px;font-size:15.45px;font-weight:400;color:#1b2230;letter-spacing:-0.237px">Receita e Desp. Fixa</span>
<span class="t" style="-webkit-text-stroke:.15px;left:832.28px;top:305.15px;font-size:15.45px;font-weight:400;color:#1b2230;letter-spacing:-0.440px">Aluguel PF e PJ</span>
<span class="t" style="-webkit-text-stroke:.15px;left:956.03px;top:305.15px;font-size:15.45px;font-weight:400;color:#1b2230;letter-spacing:0.233px">Descontos</span>
<span class="t" style="-webkit-text-stroke:.15px;left:1049.28px;top:305.15px;font-size:15.45px;font-weight:400;color:#1b2230;letter-spacing:0.177px">Parcelas</span>
<span class="t" style="-webkit-text-stroke:.15px;left:1129.78px;top:305.15px;font-size:15.45px;font-weight:400;color:#1b2230;letter-spacing:0.066px">Gerais</span>
<span class="t" style="-webkit-text-stroke:.15px;left:1194.78px;top:305.15px;font-size:15.45px;font-weight:400;color:#1b2230;letter-spacing:0.368px">Observação</span>
<span class="t" style="-webkit-text-stroke:.15px;left:1303.03px;top:305.15px;font-size:15.45px;font-weight:400;color:#1b2230;letter-spacing:0.452px">Auditoria</span>
<span class="t" style="left:1397.46px;top:9.45px;font-size:10.81px;font-weight:700;color:#fff;letter-spacing:-0.616px">1</span>
</body>
</html>
